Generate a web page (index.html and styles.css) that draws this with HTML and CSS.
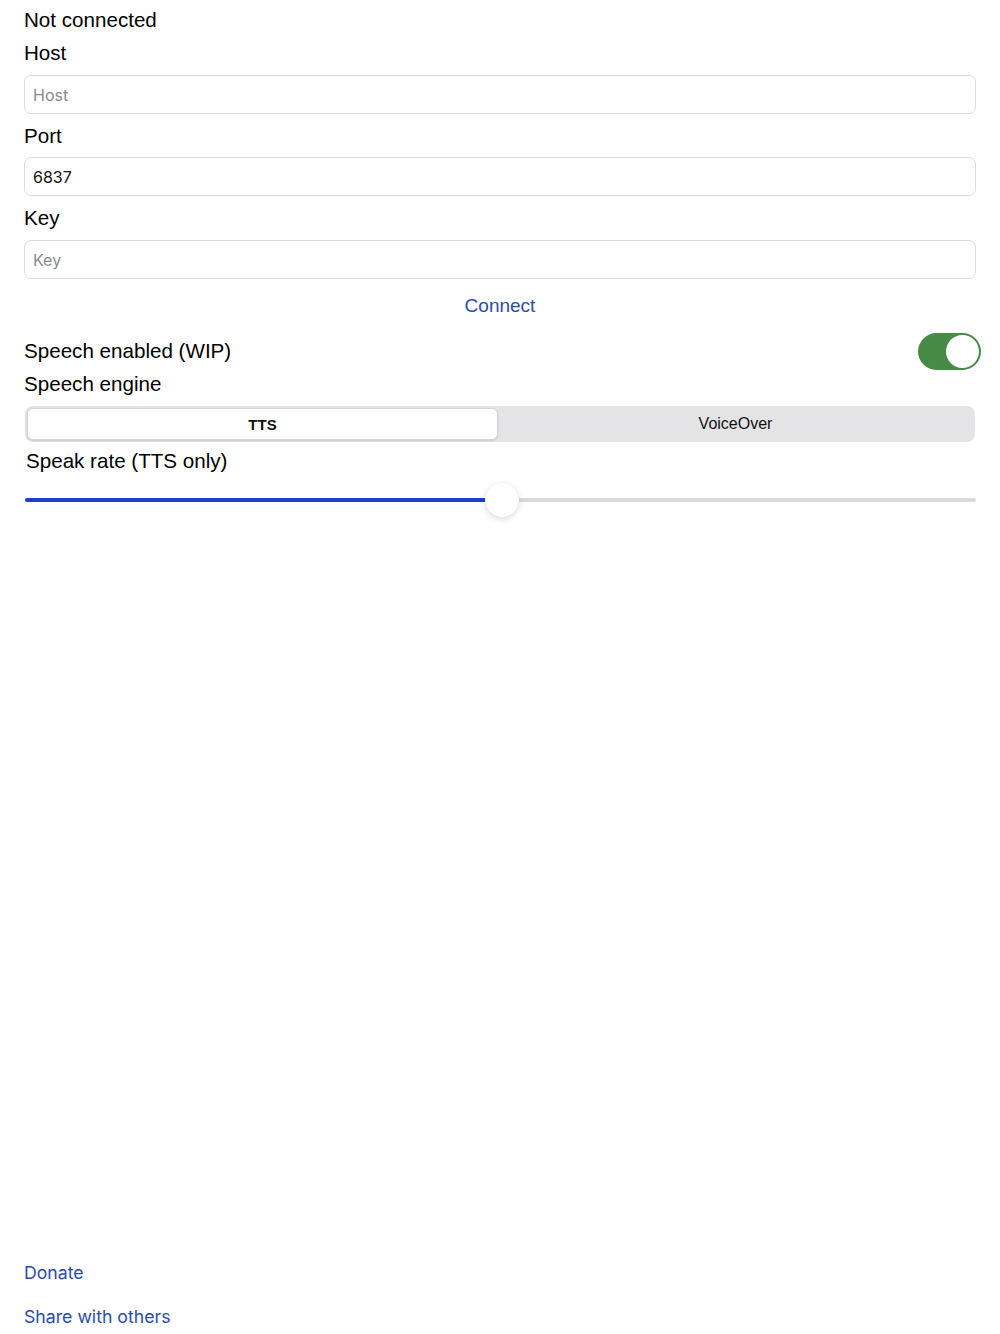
FILE: index.html
```html
<!DOCTYPE html>
<html>
<head>
<meta charset="utf-8">
<link rel="stylesheet" href="styles.css">
</head>
<body>
<div class="page">
  <div class="status">Not connected</div>
  <label class="label gap-host">Host</label>
  <div class="field"><span class="placeholder">Host</span></div>
  <label class="label">Port</label>
  <div class="field field-port"><span class="value">6837</span></div>
  <label class="label">Key</label>
  <div class="field"><span class="placeholder">Key</span></div>
  <div class="connect">Connect</div>
  <div class="row">
    <span class="row-label">Speech enabled (WIP)</span>
    <span class="switch"><span class="knob"></span></span>
  </div>
  <div class="label label-engine">Speech engine</div>
  <div class="segmented">
    <div class="seg seg-on">TTS</div>
    <div class="seg">VoiceOver</div>
  </div>
  <div class="label label-rate">Speak rate (TTS only)</div>
  <div class="slider">
    <div class="track"><div class="fill" style="width:48.4%"></div></div>
    <div class="thumb" style="left:48.4%"></div>
  </div>
  <div class="footer">
    <div class="link">Donate</div>
    <div class="link link-share">Share with others</div>
  </div>
</div>
</body>
</html>
```
FILE: styles.css
```css
html, body {
  margin: 0;
  padding: 0;
  background: #ffffff;
}
body {
  font-family: "Liberation Sans", Arial, sans-serif;
  color: #000;
}
.page {
  box-sizing: border-box;
  min-height: 1334px;
  padding: 8px 24px 5px 24px;
  display: flex;
  flex-direction: column;
}
.status, .label, .row-label {
  font-size: 20.6px;
  line-height: 24px;
  display: block;
}
.label { margin-top: 10px; }
.gap-host { margin-top: 9px; }
.field {
  box-sizing: border-box;
  height: 39px;
  margin-top: 10px;
  border: 1px solid #dcdcdc;
  border-radius: 7px;
  display: flex;
  align-items: center;
  padding-left: 8px;
  font-family: "Inter", "Liberation Sans", sans-serif;
  font-size: 16px;
}
.field-port { margin-top: 9px; }
.placeholder { color: #8a8a8e; }
.value { color: #111; }
.connect {
  margin-top: 15px;
  text-align: center;
  font-size: 19px;
  line-height: 24px;
  color: #2b4da8;
}
.row {
  margin-top: 15px;
  height: 36px;
  display: flex;
  align-items: center;
  justify-content: space-between;
}
.switch {
  box-sizing: border-box;
  width: 63px;
  height: 37px;
  margin-right: -5px;
  border-radius: 19px;
  background: #468a46;
  display: flex;
  align-items: center;
  justify-content: flex-end;
  padding-right: 2px;
}
.knob {
  width: 33px;
  height: 33px;
  border-radius: 50%;
  background: #fff;
}
.label-engine { margin-top: 3px; }
.segmented {
  margin-top: 10px;
  margin-left: 1px;
  margin-right: 1px;
  height: 36px;
  box-sizing: border-box;
  padding: 2px;
  border-radius: 8px;
  background: #e4e4e7;
  display: flex;
}
.seg {
  flex: 1;
  display: flex;
  align-items: center;
  justify-content: center;
  font-size: 16px;
  color: #111;
  border-radius: 6px;
}
.seg-on {
  flex: 0 0 469px;
  background: #fff;
  border: 1px solid #d4d4d4;
  box-shadow: 0 1px 2px rgba(0,0,0,0.12);
  font-weight: bold;
  font-size: 15px;
}
.label-rate { margin-top: 7px; margin-left: 2px; }
.slider {
  position: relative;
  margin-top: 10px;
  margin-left: 1px;
  height: 34px;
  display: flex;
  align-items: center;
}
.track {
  flex: 1;
  height: 4px;
  border-radius: 2px;
  background: #d9d9d9;
  overflow: hidden;
}
.fill {
  height: 100%;
  background: #1b3fce;
}
.thumb {
  position: absolute;
  top: 0;
  width: 34px;
  height: 34px;
  border-radius: 50%;
  background: #fff;
  box-shadow: 0 2px 6px rgba(0,0,0,0.14), 0 0 1px rgba(0,0,0,0.1);
}
.footer {
  margin-top: auto;
}
.link {
  font-family: "Inter", "Liberation Sans", sans-serif;
  font-size: 17.7px;
  line-height: 24px;
  color: #2b4da8;
}
.link-share { margin-top: 20px; }
```
